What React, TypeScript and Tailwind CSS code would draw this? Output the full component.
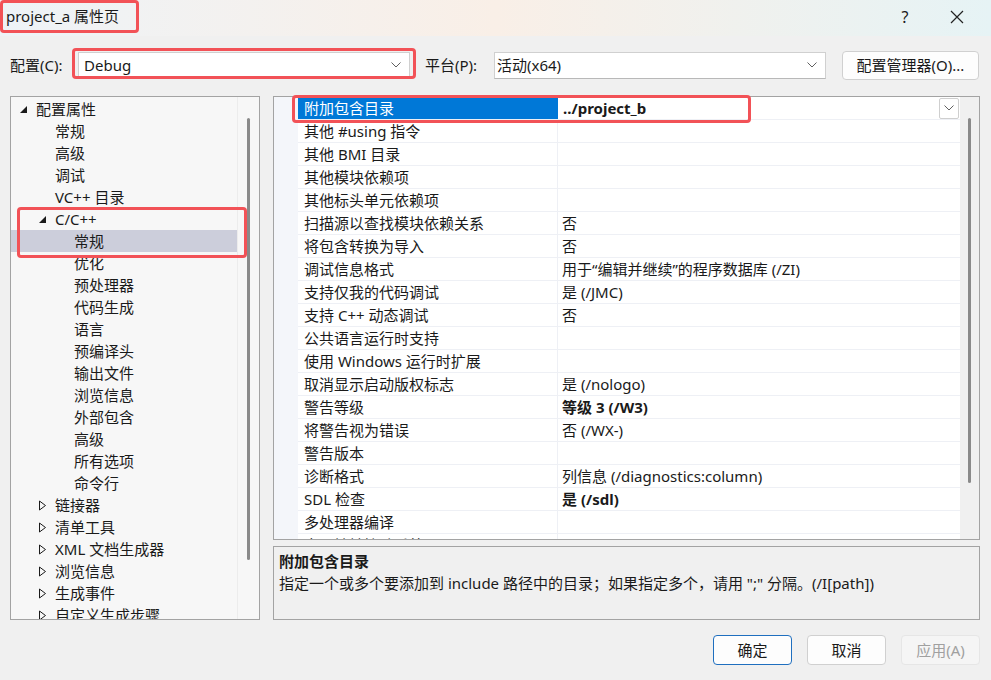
import React from "react";

type TreeItem = { label: string; level: 0 | 1 | 2; exp?: "open" | "closed"; selected?: boolean };

const tree: TreeItem[] = [
  { label: "配置属性", level: 0, exp: "open" },
  { label: "常规", level: 1 },
  { label: "高级", level: 1 },
  { label: "调试", level: 1 },
  { label: "VC++ 目录", level: 1 },
  { label: "C/C++", level: 1, exp: "open" },
  { label: "常规", level: 2, selected: true },
  { label: "优化", level: 2 },
  { label: "预处理器", level: 2 },
  { label: "代码生成", level: 2 },
  { label: "语言", level: 2 },
  { label: "预编译头", level: 2 },
  { label: "输出文件", level: 2 },
  { label: "浏览信息", level: 2 },
  { label: "外部包含", level: 2 },
  { label: "高级", level: 2 },
  { label: "所有选项", level: 2 },
  { label: "命令行", level: 2 },
  { label: "链接器", level: 1, exp: "closed" },
  { label: "清单工具", level: 1, exp: "closed" },
  { label: "XML 文档生成器", level: 1, exp: "closed" },
  { label: "浏览信息", level: 1, exp: "closed" },
  { label: "生成事件", level: 1, exp: "closed" },
  { label: "自定义生成步骤", level: 1, exp: "closed" },
];

type Row = { name: string; value?: string; bold?: boolean };
const rows: Row[] = [
  { name: "其他 #using 指令" },
  { name: "其他 BMI 目录" },
  { name: "其他模块依赖项" },
  { name: "其他标头单元依赖项" },
  { name: "扫描源以查找模块依赖关系", value: "否" },
  { name: "将包含转换为导入", value: "否" },
  { name: "调试信息格式", value: "用于“编辑并继续”的程序数据库 (/ZI)" },
  { name: "支持仅我的代码调试", value: "是 (/JMC)" },
  { name: "支持 C++ 动态调试", value: "否" },
  { name: "公共语言运行时支持" },
  { name: "使用 Windows 运行时扩展" },
  { name: "取消显示启动版权标志", value: "是 (/nologo)" },
  { name: "警告等级", value: "等级 3 (/W3)", bold: true },
  { name: "将警告视为错误", value: "否 (/WX-)" },
  { name: "警告版本" },
  { name: "诊断格式", value: "列信息 (/diagnostics:column)" },
  { name: "SDL 检查", value: "是 (/sdl)", bold: true },
  { name: "多处理器编译" },
  { name: "启用地址擦除系统", value: "否" },
];

const levelPad: Record<number, string> = { 0: "pl-[8px]", 1: "pl-[27px]", 2: "pl-[46px]" };

function Chevron({ color = "#606060" }: { color?: string }) {
  return (
    <svg width="10" height="6" viewBox="0 0 10 6">
      <polyline points="0.5,0.5 5,5 9.5,0.5" fill="none" stroke={color} strokeWidth="1" />
    </svg>
  );
}

function Expander({ kind }: { kind?: "open" | "closed" }) {
  if (kind === "open")
    return (
      <svg width="9" height="9" viewBox="0 0 9 9">
        <polygon points="8,1 8,8 1,8" fill="#1a1a1a" />
      </svg>
    );
  if (kind === "closed")
    return (
      <svg width="9" height="11" viewBox="0 0 9 11">
        <polygon points="1.5,1 7.5,5.5 1.5,10" fill="none" stroke="#1a1a1a" strokeWidth="1" />
      </svg>
    );
  return null;
}

function RedBox({ className }: { className: string }) {
  return <div className={"absolute border-[3px] border-[#f25257] rounded-[4px] pointer-events-none " + className} />;
}

export default function App() {
  return (
    <div className="relative w-[991px] h-[680px] overflow-hidden bg-[#f0f0f0] flex flex-col text-[15px] text-[#1a1a1a] font-['Noto_Sans','Noto_Sans_CJK_SC',sans-serif]">
      {/* title bar */}
      <div className="h-[36px] flex items-center bg-gradient-to-r from-[#eef3f7] via-[#f9efe7] to-[#e6f3f5]">
        <div className="pl-[6px] pb-[3px] flex-1">project_a 属性页</div>
        <div className="w-[20px] text-center pb-[3px] text-[16px]">?</div>
        <div className="w-[44px] ml-[20px] mr-[12px] flex items-center justify-center pb-[3px]">
          <svg width="14" height="14" viewBox="0 0 14 14">
            <path d="M1 1 L13 13 M13 1 L1 13" stroke="#222" strokeWidth="1.2" />
          </svg>
        </div>
      </div>

      {/* config row */}
      <div className="mt-[14px] h-[30px] flex items-center pl-[10px]">
        <span className="w-[68px]">配置(C):</span>
        <div className="w-[332px] h-[27px] bg-white border border-[#d0d0d0] flex items-center pl-[5px] pr-[8px]">
          <span className="flex-1">Debug</span>
          <Chevron />
        </div>
        <span className="ml-[15px] w-[69px]">平台(P):</span>
        <div className="w-[332px] h-[27px] bg-white border border-[#d0d0d0] border-b-[#b8b8b8] flex items-center pl-[2px] pr-[8px]">
          <span className="flex-1">活动(x64)</span>
          <Chevron />
        </div>
        <div className="ml-[16px] w-[137px] h-[29px] rounded-[4px] border border-[#d0d0d0] bg-[#fdfdfd] flex items-center justify-center">
          配置管理器(O)...
        </div>
      </div>

      {/* main */}
      <div className="mt-[16px] flex px-[10px] gap-[13px]">
        {/* tree */}
        <div className="w-[250px] h-[524px] border border-[#a3a3a3] bg-[#f7f7f7] flex overflow-hidden">
          <div className="flex-1 pt-[1px] overflow-hidden">
            {tree.map((t, i) => (
              <div
                key={i}
                className={
                  "h-[22px] flex items-center whitespace-nowrap " +
                  levelPad[t.level] +
                  (t.selected ? " bg-[#cccedb]" : "")
                }
              >
                <span className="w-[17px] flex items-center">
                  <Expander kind={t.exp} />
                </span>
                <span>{t.label}</span>
              </div>
            ))}
          </div>
          <div className="w-[22px] border-l border-[#ececec] pt-[21px] flex justify-center">
            <div className="w-[3px] h-[442px] rounded-full bg-[#8a8a8a]" />
          </div>
        </div>

        {/* right */}
        <div className="w-[707px] flex flex-col gap-[6px]">
          <div className="h-[444px] border border-[#a3a3a3] bg-white flex overflow-hidden">
            <div className="w-[24px] bg-[#f4f6fa]" />
            <div className="flex-1 overflow-hidden">
              {/* selected row */}
              <div className="h-[23px] flex border-b border-[#eef0f5]">
                <div className="w-[260px] bg-[#0078d7] text-white pl-[6px] flex items-center">附加包含目录</div>
                <div className="flex-1 flex items-center pl-[5px] pr-[1px] font-bold">
                  <span className="flex-1">../project_b</span>
                  <div className="w-[20px] h-[21px] border border-[#cfcfcf] rounded-[2px] bg-white flex items-center justify-center">
                    <Chevron />
                  </div>
                </div>
              </div>
              {rows.map((r, i) => (
                <div key={i} className="h-[23px] flex border-b border-[#eef0f5]">
                  <div className="w-[260px] pl-[6px] flex items-center border-r border-[#eef0f5] whitespace-nowrap">{r.name}</div>
                  <div className={"flex-1 pl-[4px] flex items-center whitespace-nowrap" + (r.bold ? " font-bold" : "")}>
                    {r.value ?? ""}
                  </div>
                </div>
              ))}
            </div>
            <div className="w-[19px] bg-[#f0f0f0] pt-[21px] flex justify-center">
              <div className="w-[3px] h-[365px] rounded-full bg-[#8a8a8a]" />
            </div>
          </div>
          <div className="h-[74px] border border-[#a3a3a3] bg-[#f0f0f0] pl-[5px] pt-[3px] leading-[22px]">
            <div className="font-bold">附加包含目录</div>
            <div>指定一个或多个要添加到 include 路径中的目录；如果指定多个，请用 ";" 分隔。(/I[path])</div>
          </div>
        </div>
      </div>

      {/* buttons */}
      <div className="mt-[15px] flex justify-end gap-[15px] pr-[11px]">
        <div className="w-[79px] h-[30px] rounded-[4px] border border-[#1f6fbf] bg-[#fdfdfd] flex items-center justify-center">确定</div>
        <div className="w-[79px] h-[30px] rounded-[4px] border border-[#d0d0d0] bg-[#fdfdfd] flex items-center justify-center">取消</div>
        <div className="w-[79px] h-[30px] rounded-[4px] border border-[#e6e6e6] bg-[#f5f5f5] text-[#a0a0a0] flex items-center justify-center">应用(A)</div>
      </div>

      {/* annotation boxes */}
      <RedBox className="left-0 top-0 w-[139px] h-[33px]" />
      <RedBox className="left-[72px] top-[48px] w-[344px] h-[31px]" />
      <RedBox className="left-[17px] top-[207px] w-[230px] h-[51px]" />
      <RedBox className="left-[292px] top-[95px] w-[459px] h-[28px]" />
    </div>
  );
}
